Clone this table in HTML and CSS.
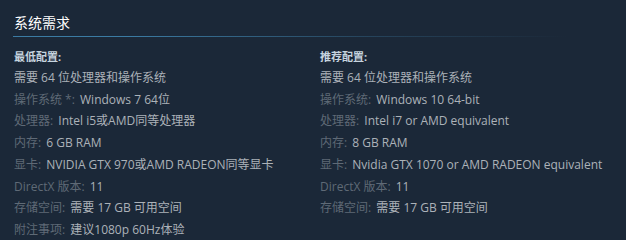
FILE: index.html
```html
<!DOCTYPE html>
<html lang="zh-CN">
<head>
<meta charset="utf-8">
<link rel="stylesheet" href="styles.css">
</head>
<body>
<div class="sysreq">
  <h2 class="title">系统需求</h2>
  <div class="cols">
    <div class="col">
      <div class="col-head">最低配置:</div>
      <ul class="list">
        <li><span class="val">需要 64 位处理器和操作系统</span></li>
        <li><span class="lab">操作系统 *:</span> <span class="val">Windows 7 64位</span></li>
        <li><span class="lab">处理器:</span> <span class="val">Intel i5或AMD同等处理器</span></li>
        <li><span class="lab">内存:</span> <span class="val">6 GB RAM</span></li>
        <li><span class="lab">显卡:</span> <span class="val">NVIDIA GTX 970或AMD RADEON同等显卡</span></li>
        <li><span class="lab">DirectX 版本:</span> <span class="val">11</span></li>
        <li><span class="lab">存储空间:</span> <span class="val">需要 17 GB 可用空间</span></li>
        <li><span class="lab">附注事项:</span> <span class="val">建议1080p 60Hz体验</span></li>
      </ul>
    </div>
    <div class="col">
      <div class="col-head">推荐配置:</div>
      <ul class="list">
        <li><span class="val">需要 64 位处理器和操作系统</span></li>
        <li><span class="lab">操作系统:</span> <span class="val">Windows 10 64-bit</span></li>
        <li><span class="lab">处理器:</span> <span class="val">Intel i7 or AMD equivalent</span></li>
        <li><span class="lab">内存:</span> <span class="val">8 GB RAM</span></li>
        <li><span class="lab">显卡:</span> <span class="val">Nvidia GTX 1070 or AMD RADEON equivalent</span></li>
        <li><span class="lab">DirectX 版本:</span> <span class="val">11</span></li>
        <li><span class="lab">存储空间:</span> <span class="val">需要 17 GB 可用空间</span></li>
      </ul>
    </div>
  </div>
</div>
</body>
</html>
```
FILE: styles.css
```css
html, body {
  margin: 0;
  padding: 0;
  background: #1b2838;
}
body {
  font-family: "Open Sans", "Noto Sans CJK SC", sans-serif;
  width: 626px;
  height: 240px;
  overflow: hidden;
}
.sysreq {
  padding: 0 0 0 13px;
}
.title {
  margin: 0;
  padding: 14px 0 0 1px;
  height: 22px;
  font-size: 14px;
  font-weight: normal;
  line-height: 18px;
  color: #ffffff;
  border-bottom: 1px solid transparent;
  border-image: linear-gradient(to right, #3b7ba3 0%, #3b7ba3 20%, rgba(59,123,163,0.35) 60%, #1b2838 95%) 1;
  width: 580px;
}
.cols {
  display: flex;
  padding-left: 1px;
}
.col {
  width: 309px;
}
.col-head {
  margin-top: 12px;
  font-size: 11px;
  font-weight: bold;
  line-height: 16px;
  color: #c6d4df;
}
.list {
  list-style: none;
  margin: 2px 0 0 0;
  padding: 0;
  font-size: 12px;
  line-height: 21.7px;
}
.list li {
  white-space: nowrap;
}
.lab {
  color: #5f6a76;
  margin-right: 2px;
}
.val {
  color: #acb2b8;
}
```
